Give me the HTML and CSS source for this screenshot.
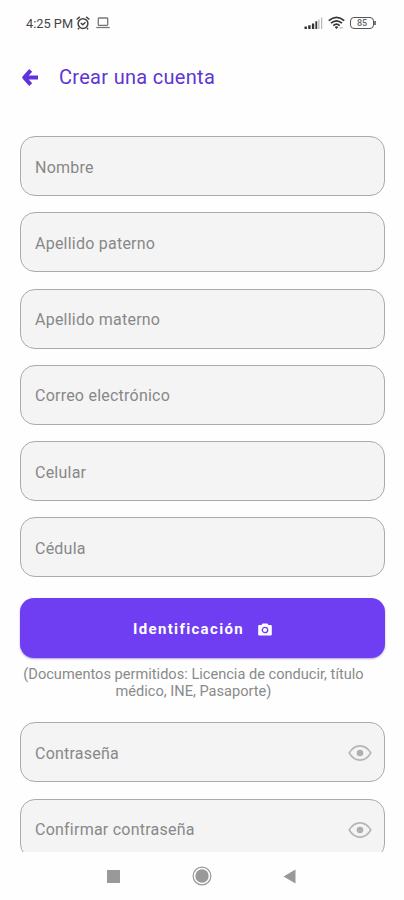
FILE: index.html
```html
<!DOCTYPE html>
<html lang="es">
<head>
  <meta charset="UTF-8" />
  <meta name="viewport" content="width=device-width, initial-scale=1" />
  <title>Crear una cuenta</title>
  <link rel="stylesheet" href="styles.css">
</head>
<body>
  <div class="status-bar">
    <span class="hora">4:25 PM</span>
    <svg class="icon-alarma" width="14" height="14" viewBox="0 0 14 14" fill="none" stroke="#444" stroke-width="1.5">
      <circle cx="7" cy="7.6" r="4.9" />
      <path d="M.6 3.5 3.8.9M13.4 3.500 10.200.9M4.800 7l2 1.800 2.600-2.600M3 12l-1 1.400M11 12l1 1.400" />
    </svg>
    <svg class="icon-laptop" width="14" height="12" viewBox="0 0 14 12" fill="none" stroke="#777" stroke-width="1.3">
      <rect x="2.3" y="1" width="9.4" height="7.4" rx=".8" />
      <path d="M.3 10.500h13.400" />
    </svg>
    <div class="status-right">
      <svg width="19" height="12" viewBox="0 0 19 12">
        <path d="M.5 9.5h2.4V12H.5zM4.2 8.2h2.4V12H4.2zM7.9 6.5h2.3V12H7.9zM11.4 4.3h1.8V12h-1.8z" fill="#333" />
        <path d="M14.3 2.4h1.1V12h-1.1zM17.2.5h1V12h-1z" fill="#aaa" />
      </svg>
      <svg width="17" height="14" viewBox="0 0 18 14" fill="none" stroke="#333" stroke-width="1.8">
        <path d="M.8 4.5Q9-2.5 17.2 4.5M3.2 7.2Q9 2.2 14.8 7.2M5.6 9.8Q9 6.8 12.4 9.8" />
        <path d="M7 11.2Q9 9.6 11 11.2L9 13.4z" fill="#333" stroke="none" />
        <path d="M12.4 12.2h3.2" stroke="#999" stroke-width="1" />
      </svg>
      <div class="bateria"><span>85</span></div>
    </div>
  </div>

  <header class="header">
    <svg width="18" height="19" viewBox="0 0 18 19" fill="none" stroke="#5f31e0" stroke-width="4">
      <path d="M9.700 2.300 3.200 9.500l6.500 7.200M4 9.500h13" stroke-linejoin="round" />
    </svg>
    <h1>Crear una cuenta</h1>
  </header>

  <main class="formulario">
    <label class="campo"><span>Nombre</span><input type="text" /></label>
    <label class="campo"><span>Apellido paterno</span><input type="text" /></label>
    <label class="campo"><span>Apellido materno</span><input type="text" /></label>
    <label class="campo"><span>Correo electrónico</span><input type="email" /></label>
    <label class="campo"><span>Celular</span><input type="tel" /></label>
    <label class="campo"><span>Cédula</span><input type="text" /></label>

    <button class="btn-identificacion" type="button">
      <span>Identificación</span>
      <svg width="14" height="13" viewBox="0 0 14 13">
        <path d="M4.700.5h4.600l1.200 1.600h2c.8 0 1.300.5 1.300 1.300v7.800c0 .8-.5 1.300-1.300 1.300h-11C.7 12.500.2 12 .2 11.200V3.400c0-.8.5-1.300 1.300-1.300h2z" fill="#fff" />
        <circle cx="7" cy="7" r="2.7" fill="#fff" stroke="#6f3df2" stroke-width="1.3" />
      </svg>
    </button>
    <p class="nota">(Documentos permitidos: Licencia de conducir, título médico, INE, Pasaporte)</p>

    <label class="campo">
      <span>Contraseña</span><input type="password" />
      <svg class="ojo" width="24" height="16" viewBox="0 0 24 16">
        <path d="M1.2 8Q5.5.9 12 .9T22.8 8Q18.5 15.1 12 15.1T1.2 8z" fill="none" stroke="#b5b5b5" stroke-width="1.6" />
        <circle cx="12" cy="8" r="3.3" fill="#b0b0b0" />
      </svg>
    </label>
    <label class="campo">
      <span>Confirmar contraseña</span><input type="password" />
      <svg class="ojo" width="24" height="16" viewBox="0 0 24 16">
        <path d="M1.2 8Q5.5.9 12 .9T22.8 8Q18.5 15.1 12 15.1T1.2 8z" fill="none" stroke="#b5b5b5" stroke-width="1.6" />
        <circle cx="12" cy="8" r="3.3" fill="#b0b0b0" />
      </svg>
    </label>
  </main>

  <nav class="nav-bar">
    <svg width="13" height="13" viewBox="0 0 13 13"><rect width="13" height="13" rx=".5" fill="#999" /></svg>
    <svg width="20" height="20" viewBox="0 0 20 20">
      <circle cx="10" cy="10" r="8.9" fill="none" stroke="#999" stroke-width="1.2" />
      <circle cx="10" cy="10" r="6.7" fill="#999" />
    </svg>
    <svg width="13" height="15" viewBox="0 0 13 15"><path d="M12.5.5v14L.5 7.5z" fill="#999" /></svg>
  </nav>
</body>
</html>
```
FILE: styles.css
```css
* {
  box-sizing: border-box;
}
body {
  font-family: Roboto, sans-serif;
  background: #fefefe;
  margin: 0;
  height: 900px;
  display: flex;
  flex-direction: column;
  overflow: hidden;
}

/* Barra de estado */
.status-bar {
  display: flex;
  align-items: center;
  height: 46px;
  padding: 0 28px 0 26px;
  flex-shrink: 0;
}
.hora {
  font-size: 12.8px;
  color: #444;
  width: 50px;
  white-space: nowrap;
}
.icon-laptop {
  margin-left: 6px;
}
.status-right {
  display: flex;
  align-items: center;
  gap: 5px;
  margin-left: auto;
}
.bateria {
  display: flex;
  align-items: center;
  justify-content: center;
  position: relative;
  width: 24px;
  height: 12px;
  border: 1.5px solid #555;
  border-radius: 4px;
  font-size: 9px;
  font-weight: 500;
  line-height: 1;
  color: #666;
  margin-right: 2px;
}
.bateria::after {
  content: "";
  position: absolute;
  right: -3px;
  top: 3px;
  width: 2px;
  height: 4px;
  background: #777;
}

.header {
  display: flex;
  align-items: center;
  height: 62px;
  padding-left: 21px;
  flex-shrink: 0;
}
.header h1 {
  margin: 0 0 0 20px;
  font-size: 20px;
  font-weight: 400;
  letter-spacing: 0.3px;
  color: #5f35d5;
}

/* Formulario */
.formulario {
  flex: 1;
  min-height: 0;
  overflow: hidden;
  padding: 28px 19px 0 20px;
}
.campo {
  display: flex;
  align-items: center;
  position: relative;
  height: 60px;
  margin-bottom: 16.3px;
  padding: 2px 12px 0 14px;
  background: #f4f4f4;
  border: 1px solid #aaa;
  border-radius: 15px;
  font-size: 16px;
  letter-spacing: 0.23px;
  color: #888;
}
.campo span {
  white-space: nowrap;
}
.campo input {
  flex: 1;
  min-width: 0;
  border: none;
  outline: none;
  background: none;
}
.btn-identificacion {
  display: flex;
  align-items: center;
  justify-content: center;
  gap: 14px;
  width: 100%;
  height: 60px;
  margin-top: 21px;
  padding: 2px 0 0;
  border: none;
  border-radius: 14px;
  background: #6f3df2;
  box-shadow: 0 1px 2px rgba(60, 30, 150, 0.4);
  color: #fff;
  font-family: inherit;
  font-size: 15px;
  font-weight: 700;
  letter-spacing: 1.35px;
}
.nota {
  margin: 8px 19px 22px 1px;
  font-size: 14.6px;
  line-height: 17px;
  text-align: center;
  color: #8a8a8a;
}

/* Botones de navegación */
.nav-bar {
  display: flex;
  align-items: center;
  justify-content: space-between;
  height: 48px;
  padding: 0 108px 0 107px;
  flex-shrink: 0;
}
```
